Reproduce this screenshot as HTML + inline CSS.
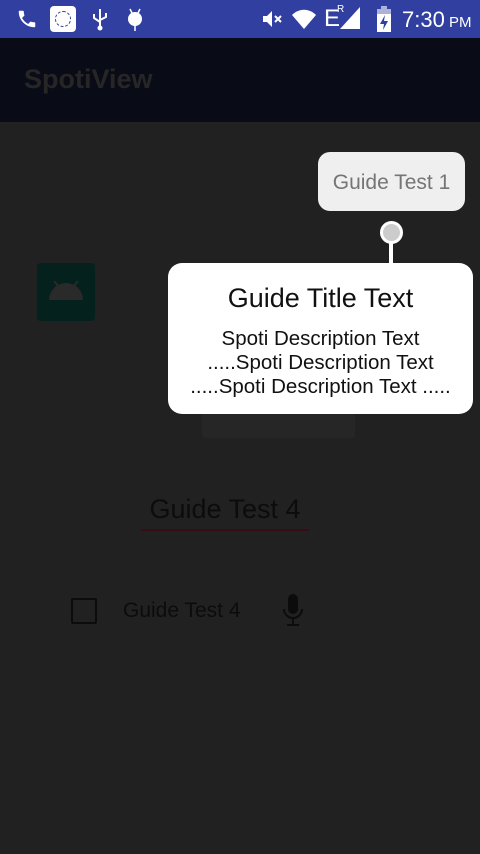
<!DOCTYPE html>
<html><head><style>
*{margin:0;padding:0;box-sizing:border-box}
body{width:480px;height:854px;background:#212121;font-family:"Liberation Sans",sans-serif;position:relative;overflow:hidden}
.abs{position:absolute}
</style></head><body>
<div class="abs" style="left:0;top:0;width:480px;height:38px;background:#3140a0"></div>
<svg class="abs" style="left:16px;top:8px" width="22" height="22" viewBox="0 0 24 24"><path fill="#fff" d="M6.6 10.8c1.4 2.8 3.8 5.1 6.6 6.6l2.2-2.2c.3-.3.7-.4 1-.2 1.1.4 2.3.6 3.6.6.6 0 1 .4 1 1V20c0 .6-.4 1-1 1C10.6 21 3 13.4 3 4c0-.6.4-1 1-1h3.5c.6 0 1 .4 1 1 0 1.3.2 2.5.6 3.6.1.3 0 .7-.2 1z"/></svg>
<div class="abs" style="left:50px;top:6px;width:26px;height:26px;background:#fff;border-radius:4px"></div>
<div class="abs" style="left:55px;top:11px;width:16px;height:16px;border:1.5px dashed #3140a0;border-radius:50%"></div>
<svg class="abs" style="left:90px;top:7px" width="20" height="24" viewBox="0 0 20 24"><path stroke="#fff" stroke-width="2" fill="none" d="M10 2v18M4 7v4l6 4M16 6v4l-6 3"/><circle cx="10" cy="21" r="2.5" fill="#fff"/></svg>
<svg class="abs" style="left:126px;top:7px" width="18" height="24" viewBox="0 0 18 24"><circle cx="9" cy="12" r="7" fill="#fff"/><path stroke="#fff" stroke-width="1.5" d="M4 2l2 4M14 2l-2 4M9 18v6"/></svg>
<svg class="abs" style="left:262px;top:9px" width="22" height="20" viewBox="0 0 22 20"><path fill="#fff" d="M1 7h4l5-5v16l-5-5H1z"/><path stroke="#fff" stroke-width="2" d="M13 7l6 6M19 7l-6 6"/></svg>
<svg class="abs" style="left:292px;top:8px" width="24" height="22" viewBox="0 0 24 22"><path fill="#fff" d="M0 7C7 0 17 0 24 7L12 21z"/></svg>
<div class="abs" style="left:324px;top:6px;color:#fff;font-size:24px;line-height:26px">E</div>
<div class="abs" style="left:337px;top:4px;color:#fff;font-size:10px">R</div>
<svg class="abs" style="left:340px;top:7px" width="20" height="22"><path fill="#fff" d="M20 0V22H0z"/></svg>
<svg class="abs" style="left:376px;top:6px" width="16" height="26" viewBox="0 0 16 26"><rect x="1" y="3" width="14" height="23" fill="#fff" opacity=".6"/><rect x="5" y="0" width="6" height="3" fill="#fff" opacity=".6"/><rect x="1" y="8" width="14" height="18" fill="#fff"/><path fill="#3140a0" d="M9 9l-5 9h4l-1 6 5-9H8z"/></svg>
<div class="abs" style="left:402px;top:6px;color:#fff;font-size:22px;line-height:28px">7:30<span style="font-size:15px"> PM</span></div>
<div class="abs" style="left:0;top:38px;width:480px;height:84px;background:#090c16"></div>
<div class="abs" style="left:24px;top:64px;font-size:27px;font-weight:bold;color:#262626">SpotiView</div>
<div class="abs" style="left:37px;top:263px;width:58px;height:58px;background:#04211d;border-radius:4px"></div>
<svg class="abs" style="left:48px;top:280px" width="36" height="22" viewBox="0 0 36 22"><path fill="#2a2a2a" d="M1 20a17 17 0 0 1 34 0z"/><path stroke="#2a2a2a" stroke-width="2" d="M6 1l5 6M30 1l-5 6"/></svg>
<div class="abs" style="left:202px;top:395px;width:153px;height:43px;background:#262626;border-radius:3px"></div>
<div class="abs" style="left:131px;top:494px;width:188px;text-align:center;font-size:27px;color:#0c0c0c">Guide Test 4</div>
<div class="abs" style="left:141px;top:529px;width:168px;height:2px;background:#3a0d14"></div>
<div class="abs" style="left:71px;top:598px;width:26px;height:26px;border:2.5px solid #0c0c0c;border-radius:2px"></div>
<div class="abs" style="left:123px;top:599px;font-size:21px;color:#0c0c0c">Guide Test 4</div>
<svg class="abs" style="left:282px;top:594px" width="22" height="34" viewBox="0 0 22 34"><rect x="6" y="0" width="10" height="20" rx="5" fill="#0c0c0c"/><path stroke="#0c0c0c" stroke-width="2" fill="none" d="M2 15a9 9 0 0 0 18 0M11 24v6M5 31h12"/></svg>
<div class="abs" style="left:318px;top:152px;width:147px;height:59px;background:#efefef;border-radius:12px;color:#757575;font-size:21px;line-height:61px;text-align:center">Guide Test 1</div>
<div class="abs" style="left:389px;top:240px;width:4px;height:26px;background:#fff"></div>
<div class="abs" style="left:380px;top:221px;width:23px;height:23px;border-radius:50%;background:#ccc;border:3.5px solid #fff"></div>
<div class="abs" style="left:168px;top:263px;width:305px;height:151px;background:#fff;border-radius:14px;text-align:center;color:#111">
<div style="font-size:27px;margin-top:20px;line-height:30px">Guide Title Text</div>
<div style="font-size:20.5px;line-height:24px;margin-top:14px;white-space:nowrap">Spoti Description Text<br>.....Spoti Description Text<br>.....Spoti Description Text .....</div>
</div>
</body></html>
